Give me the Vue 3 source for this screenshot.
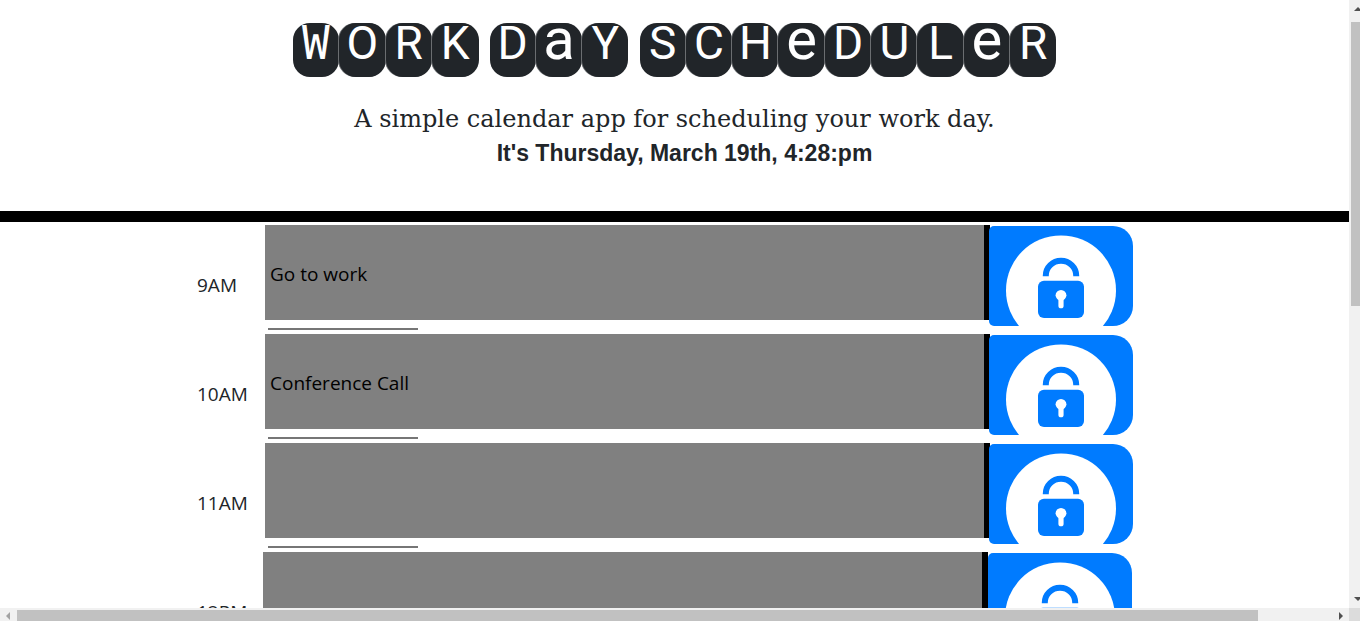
<script setup>
import { ref } from 'vue'

const title = ['WORK', 'DaY', 'SCHeDULeR']

const hours = ref([
  { label: '9AM', task: 'Go to work' },
  { label: '10AM', task: 'Conference Call' },
  { label: '11AM', task: '' },
  { label: '12PM', task: '', narrow: true }
])
</script>

<template>
  <div class="window">
    <div class="page">
      <header class="hero">
        <h1 class="title">
          <span v-for="word in title" :key="word" class="word" :class="'len-' + word.length">
            <span
              v-for="(letter, i) in word"
              :key="i"
              class="tile"
              :class="{ small: letter === 'a' || letter === 'e', wide: letter === 'W' }"
            >{{ letter }}</span>
          </span>
        </h1>
        <p class="lead">A simple calendar app for scheduling your work day.</p>
        <p class="date">It's Thursday, March 19th, 4:28:pm</p>
      </header>

      <main class="planner">
        <div v-for="hour in hours" :key="hour.label" class="row" :class="{ narrow: hour.narrow }">
          <label class="hour" :for="'task-' + hour.label">{{ hour.label }}</label>
          <div class="slot">
            <input :id="'task-' + hour.label" v-model="hour.task" class="task" type="text" />
            <hr class="rule" />
          </div>
          <button class="save" type="button" :aria-label="'Save ' + hour.label">
            <svg viewBox="0 0 144 100" width="144" height="100" aria-hidden="true">
              <circle cx="72" cy="64.4" r="55" fill="#fff" />
              <path d="M56.8 50.3V49.5a15.2 14.8 0 0 1 30.4 0V50.3" fill="none" stroke="#007bff" stroke-width="6" />
              <rect x="49" y="54.7" width="46" height="37.2" rx="6" fill="#007bff" />
              <circle cx="72" cy="69.3" r="5.4" fill="#fff" />
              <path d="M72 70V79.7" stroke="#fff" stroke-width="5.2" stroke-linecap="round" />
            </svg>
          </button>
        </div>
      </main>
    </div>

    <div class="bar-y" aria-hidden="true">
      <svg class="arrow-y" viewBox="0 0 11 22" width="11" height="22"><path d="M5 11L9 7L13 11Z" fill="#505050" /></svg>
      <div class="thumb-y"></div>
      <svg class="arrow-y" viewBox="0 0 11 14" width="11" height="14"><path d="M5 3H13L9 7Z" fill="#505050" /></svg>
    </div>
    <div class="bar-x" aria-hidden="true">
      <svg viewBox="0 0 17 13" width="17" height="13"><path d="M10 4V12L6 8Z" fill="#a3a3a3" /></svg>
      <div class="track-x"><div class="thumb-x"></div></div>
      <svg viewBox="0 0 17 13" width="17" height="13"><path d="M7 4V12L11 8Z" fill="#505050" /></svg>
    </div>
    <div class="corner"></div>
  </div>
</template>

<style>
body {
  margin: 0;
  background: #fff;
}
</style>

<style scoped>
.window {
  display: grid;
  grid-template-columns: minmax(0, 1fr) 11px;
  grid-template-rows: minmax(0, 1fr) 13px;
  height: 100vh;
  overflow: hidden;
  color: #212529;
  font-family: "Open Sans", "Noto Sans", sans-serif;
}

.page {
  overflow: hidden;
}

.hero {
  display: flow-root;
  box-sizing: border-box;
  min-height: 222px;
  border-bottom: 11px solid #000;
  text-align: center;
}

.title {
  display: flex;
  justify-content: center;
  gap: 11px;
  margin: 23px 0 0;
  font: 400 46px/54px Roboto, sans-serif;
}

.word {
  display: flex;
}

.len-4 {
  width: 186px;
}

.len-3 {
  width: 139px;
}

.len-9 {
  width: 417px;
}

.tile {
  flex: 1 1 0;
  height: 54px;
  border-radius: 17px;
  background: #212529;
  color: #fff;
  line-height: 40px;
  text-align: center;
}

.tile + .tile {
  box-shadow: -1px 0 0 #6b6e71;
}

.tile.small {
  font-size: 58px;
  line-height: 32px;
}

.tile.wide {
  font-family: "DejaVu Sans Mono", monospace;
}

.lead {
  margin: 25px 0 0;
  font: 400 24px/34px "DejaVu Serif", serif;
}

.date {
  margin: 0;
  padding-left: 20px;
  font: 700 23px/34px "Liberation Sans", Arial, sans-serif;
}

.planner {
  padding: 3px 216px 0 197px;
}

.row {
  display: grid;
  grid-template-columns: 68px minmax(0, 1fr) 143px;
  align-items: start;
}

.row.narrow {
  grid-template-columns: 66px minmax(0, 1fr) 145px;
}

.hour {
  margin-top: 45px;
  font-size: 19px;
  font-weight: 400;
  line-height: 30px;
}

.slot {
  height: 109px;
}

.task {
  display: block;
  box-sizing: border-box;
  width: 100%;
  height: 95px;
  margin: 0;
  padding: 2px 5px 0;
  border: 0;
  border-right: 6px solid #000;
  border-radius: 0;
  outline: 0;
  background: #808080;
  color: #000;
  font: 400 19px/30px "Open Sans", "Noto Sans", sans-serif;
}

.rule {
  width: 150px;
  height: 2px;
  margin: 8px 0 0 3px;
  border: 0;
  background: #767676;
}

.narrow .rule {
  margin-left: 5px;
}

.save {
  width: 144px;
  height: 100px;
  margin: 1px 0 0 -1px;
  padding: 0;
  border: 0;
  border-radius: 5px 20px 20px 5px;
  background: #007bff;
  overflow: hidden;
  cursor: pointer;
}

.narrow .save {
  margin-left: 0;
}

.save svg {
  display: block;
}

.bar-y {
  display: flex;
  flex-direction: column;
  background: #f1f1f1;
  overflow: hidden;
}

.thumb-y {
  height: 50%;
  max-height: 284px;
  margin: 0 0 auto 2px;
  background: #c1c1c1;
}

.arrow-y {
  flex: none;
}

.bar-x {
  display: flex;
  background: #f1f1f1;
}

.bar-x svg {
  flex: none;
}

.track-x {
  flex: 1;
  padding-top: 2px;
}

.thumb-x {
  width: 94.4%;
  height: 11px;
  background: #c1c1c1;
}

.corner {
  background: #dcdcdc;
}
</style>
